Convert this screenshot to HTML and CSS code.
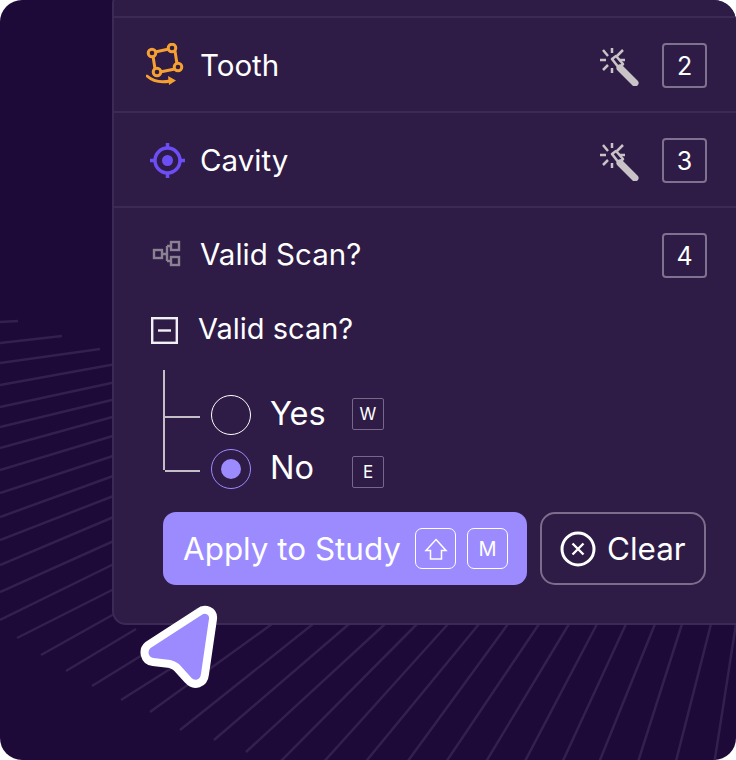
FILE: index.html
```html
<!DOCTYPE html>
<html lang="en">

<head>
     <meta charset="UTF-8">
     <meta name="viewport" content="width=device-width, initial-scale=1.0">
     <title>Study labels</title>
     <link rel="stylesheet" href="styles.css">
</head>

<body>
     <div class="stage">
          <!-- fan of lines behind the panel -->
          <svg class="fan" width="736" height="760" viewBox="0 0 736 760">
               <path d="M0 322L18 321M0 343L62 336M0 363L100 349M0 385L116 364M0 407L116 382M0 427L116 399M0 448L116 416M0 470L116 435M0 493L116 455M0 517L116 475M0 540L116 495M0 565L116 516M0 592L116 540M0 620L116 563M17 638L116 588M41 655L116 613M66 671L136 629M92 686L160 644M121 700L200 650M150 712L272 624M180 730L313 624M214 740L349 624M246 752L385 624M280 762L417 624M321 765L448 624M363 765L479 624M405 765L508 624M444 765L539 624M484 765L569 624M523 765L597 624M561 765L626 624M598 765L655 624M637 765L682 624M675 765L711 624M714 765L736 624" />
          </svg>

          <div class="panel">
               <div class="row row-top"></div>

               <div class="row">
                    <svg class="row-icon" width="40" height="44" viewBox="0 0 40 44">
                         <g fill="none" stroke="#f5a031" stroke-width="3">
                              <path d="M9 9L23 6M29 8L31 21M29 26L14 29M9 26L7 13" />
                              <circle cx="6" cy="10" r="3.800" />
                              <circle cx="26" cy="5" r="3.800" />
                              <circle cx="32" cy="24" r="3.800" />
                              <circle cx="11" cy="29" r="3.800" />
                              <path d="M1 33Q10 41 24 38" stroke-linecap="round" />
                         </g>
                         <path fill="#f5a031" d="M22 33L30 37.500L23 42Z" />
                    </svg>
                    <span class="row-title">Tooth</span>
                    <svg class="wand" width="40" height="40" viewBox="0 0 40 40">
                         <g fill="none" stroke="#c9c3c8" stroke-width="2.500">
                              <path d="M12 2V7M3 4L8 10M0 14H6M3 24L8 19M12 22V27M23 4L17 10M19 14H25" />
                              <path d="M20 22L35 37" stroke-width="7" stroke-linecap="round" />
                              <path d="M12 13L16 10L23 18L19 22Z" stroke-width="2.600" stroke-linejoin="round" />
                         </g>
                    </svg>
                    <span class="key">2</span>
               </div>

               <div class="row">
                    <svg class="row-icon" width="40" height="40" viewBox="0 0 40 40">
                         <g fill="none" stroke="#6b4ef5" stroke-width="3.500">
                              <circle cx="21.500" cy="20.500" r="12.500" />
                              <path d="M21.500 3V9M21.500 32V38M4 20.500H10M33 20.500H39" />
                         </g>
                         <circle cx="21.500" cy="20.500" r="5.500" fill="#6b4ef5" />
                    </svg>
                    <span class="row-title">Cavity</span>
                    <svg class="wand" width="40" height="40" viewBox="0 0 40 40">
                         <g fill="none" stroke="#c9c3c8" stroke-width="2.500">
                              <path d="M12 2V7M3 4L8 10M0 14H6M3 24L8 19M12 22V27M23 4L17 10M19 14H25" />
                              <path d="M20 22L35 37" stroke-width="7" stroke-linecap="round" />
                              <path d="M12 13L16 10L23 18L19 22Z" stroke-width="2.600" stroke-linejoin="round" />
                         </g>
                    </svg>
                    <span class="key">3</span>
               </div>

               <div class="row row-last">
                    <svg class="row-icon" width="40" height="40" viewBox="0 0 40 40">
                         <g fill="none" stroke="#8b8193" stroke-width="2.400">
                              <rect x="8" y="14" width="8" height="8" />
                              <rect x="25" y="6" width="8" height="8" />
                              <rect x="25" y="21" width="8" height="8" />
                              <path d="M16 18H21M21 10V25M21 10H25M21 25H25" />
                         </g>
                    </svg>
                    <span class="row-title">Valid Scan?</span>
                    <span class="key">4</span>
               </div>

               <div class="group">
                    <svg class="check" width="27" height="27" viewBox="0 0 27 27">
                         <rect x="1.200" y="1.200" width="24.600" height="24.600" fill="none" stroke="#f2eff4" stroke-width="2.400" />
                         <path d="M7 13.500H20" stroke="#f2eff4" stroke-width="2.400" />
                    </svg>
                    <span class="group-title">Valid scan?</span>
               </div>

               <div class="tree">
                    <div class="tree-line"></div>
                    <div class="options">
                         <div class="option">
                              <span class="branch"></span>
                              <span class="radio"></span>
                              <span class="option-name">Yes</span>
                              <span class="small-key small-key-w">W</span>
                         </div>
                         <div class="option">
                              <span class="branch"></span>
                              <span class="radio radio-on"></span>
                              <span class="option-name">No</span>
                              <span class="small-key small-key-e">E</span>
                         </div>
                    </div>
               </div>

               <div class="actions">
                    <button class="btn-apply">
                         Apply to Study
                         <span class="btn-key btn-key-first">
                              <svg width="24" height="24" viewBox="0 0 24 24">
                                   <path d="M12 2.500L22 13.500H17.500V22H6.500V13.500H2Z" fill="none" stroke="#fff" stroke-width="1.500" />
                              </svg>
                         </span>
                         <span class="btn-key">M</span>
                    </button>
                    <button class="btn-clear">
                         <svg width="36" height="36" viewBox="0 0 36 36">
                              <circle cx="18" cy="18" r="16" fill="none" stroke="#fff" stroke-width="3" />
                              <path d="M12.500 12.500L23.500 23.500M23.500 12.500L12.500 23.500" stroke="#fff" stroke-width="2.400" />
                         </svg>
                         Clear
                    </button>
               </div>
          </div>

          <svg class="pointer" width="90" height="100" viewBox="0 0 90 100">
               <path d="M60 12C66 7 75 11 74 19L66 74C65 84 55 87 49 80L39 69C37 66 34 65 31 64L14 62C5 61 3 50 9 45Z" />
          </svg>
     </div>
</body>

</html>
```

FILE: styles.css
```css
body {
     margin: 0;
     background-color: #fff;
     font-family: Inter, "Liberation Sans", sans-serif;
}

.stage {
     position: relative;
     width: 736px;
     height: 760px;
     overflow: hidden;
     border-radius: 22px;
     background-color: #1e0a38;
     color: #fff;
}

.fan {
     position: absolute;
     top: 0;
     left: 0;
}

.fan path {
     fill: none;
     stroke: #33204f;
     stroke-width: 2.500;
}

.panel {
     position: relative;
     height: 635px;
     margin: -10px -30px 0 112px;
     box-sizing: border-box;
     border: 2px solid #3c2a56;
     border-radius: 14px;
     background-color: #2e1b46;
}

.row {
     display: flex;
     align-items: center;
     box-sizing: border-box;
     height: 95px;
     padding: 0 57px 0 32px;
     border-bottom: 2px solid #3c2a56;
}

.row-top {
     height: 26px;
}

.row-last {
     border-bottom: none;
}

.row-icon {
     flex: none;
}

.row-title {
     margin-left: 14px;
     font-size: 29.500px;
}

.row-last .row-title {
     margin-bottom: 3px;
}

.wand {
     flex: none;
     margin-top: 2px;
     margin-left: auto;
     margin-right: 22px;
}

.key {
     display: flex;
     align-items: center;
     justify-content: center;
     box-sizing: border-box;
     width: 45px;
     height: 45px;
     margin-top: 2px;
     border: 2px solid #7f7190;
     border-radius: 4px;
     font-size: 25px;
}

.row-last .key {
     margin-top: 0;
     margin-left: auto;
}

.group {
     display: flex;
     align-items: center;
     margin: 14px 0 0 37px;
}

.group-title {
     margin-bottom: 4px;
     margin-left: 20px;
     font-size: 29px;
     line-height: 23px;
}

.tree {
     display: flex;
     margin: 26px 0 0 49px;
}

.tree-line {
     flex: none;
     width: 2px;
     height: 100px;
     background-color: #c4bfc7;
}

.options {
     display: flex;
     flex-direction: column;
     gap: 14px;
     padding-top: 25px;
}

.option {
     display: flex;
     align-items: center;
}

.branch {
     width: 35px;
     height: 2px;
     margin-top: 3px;
     background-color: #c4bfc7;
}

.radio {
     box-sizing: border-box;
     width: 40px;
     height: 40px;
     margin-left: 11px;
     border: 1.500px solid #fff;
     border-radius: 50%;
}

.radio-on {
     display: flex;
     align-items: center;
     justify-content: center;
     border-color: #9b8bff;
}

.radio-on::after {
     content: "";
     width: 20px;
     height: 20px;
     border-radius: 50%;
     background-color: #9b8bff;
}

.option-name {
     width: 82px;
     margin-bottom: 2px;
     margin-left: 19px;
     font-size: 32.500px;
     line-height: 36px;
}

.small-key {
     display: flex;
     align-items: center;
     justify-content: center;
     box-sizing: border-box;
     width: 32px;
     height: 32px;
     border: 1.500px solid #75688a;
     border-radius: 2px;
     font-size: 17px;
}

.small-key-w {
     margin-bottom: 2px;
}

.small-key-e {
     margin-top: 5px;
}

.actions {
     display: flex;
     gap: 13px;
     margin: 23px 0 0 49px;
}

.actions button {
     display: flex;
     align-items: center;
     box-sizing: border-box;
     height: 73px;
     color: #fff;
     font-family: inherit;
     font-size: 31.400px;
}

.btn-apply {
     width: 364px;
     padding: 0 19px 0 20px;
     border: none;
     border-radius: 13px;
     background-color: #9b8bff;
}

.btn-key {
     display: flex;
     align-items: center;
     justify-content: center;
     box-sizing: border-box;
     width: 41px;
     height: 41px;
     margin-left: 11px;
     border: 1.500px solid #fff;
     border-radius: 7px;
     font-size: 20px;
}

.btn-key-first {
     margin-left: auto;
}

.btn-clear {
     gap: 11px;
     width: 166px;
     padding: 0 0 0 18px;
     border: 2.500px solid #7d6d8c;
     border-radius: 15px;
     background: none;
}

.btn-clear svg {
     flex: none;
}

.pointer {
     position: absolute;
     top: 600px;
     left: 139px;
}

.pointer path {
     fill: #9b8bff;
     stroke: #fff;
     stroke-width: 8;
     stroke-linejoin: round;
}
```
